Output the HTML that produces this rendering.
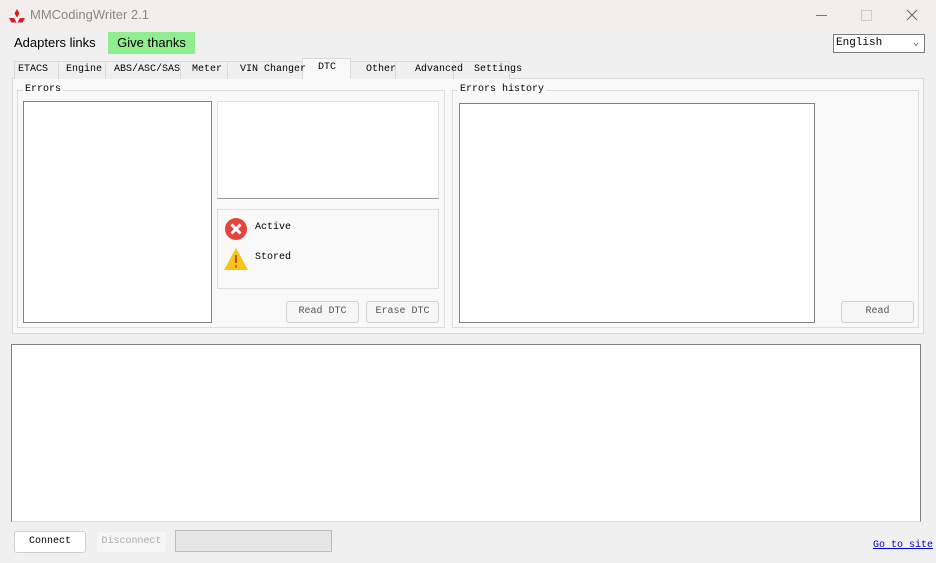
<!DOCTYPE html>
<html><head><style>
body{margin:0;width:936px;height:563px;overflow:hidden;background:#f0f0f0;font-family:"Liberation Mono",monospace;font-size:10px;position:relative}
div,span{white-space:nowrap}
.a{position:absolute}
.box{background:#fff;border:1px solid #828282;box-sizing:border-box}
.btn{position:absolute;border:1px solid #d0d0d0;border-radius:3px;background:#f6f6f6;text-align:center;color:#555;font-size:10px;line-height:20px;box-sizing:border-box;height:22px}
.tab{position:absolute;top:61px;height:18px;border:1px solid #d9d9d9;border-bottom:none;background:#f0f0f0;box-sizing:border-box}
.tt{position:absolute;top:64px}
.grp{position:absolute;border:1px solid #dcdcdc;box-sizing:border-box}
.lg{position:absolute;top:-7px;left:5px;background:#f9f9f9;padding:0 2px}
</style></head><body>
<div class="a" style="left:0;top:0;width:936px;height:31px;background:#f2eeed"></div>
<svg class="a" style="left:9px;top:9px" width="16" height="14" viewBox="0 0 16 14"><path d="M8 0L10.5 4.5L8 8.5L5.5 4.5Z M5 9L7.5 13.5H2.5L0 9Z M11 9L16 9L13.5 13.5H8.5Z" fill="#d81c23"/></svg>
<div class="a" style="left:30px;top:7px;font-family:'Liberation Sans',sans-serif;font-size:13px;color:#888">MMCodingWriter 2.1</div>
<div class="a" style="left:816px;top:15px;width:11px;height:1px;background:#777"></div>
<div class="a" style="left:861px;top:10px;width:9px;height:9px;border:1px solid #ccc"></div>
<svg class="a" style="left:906px;top:9px" width="12" height="12"><path d="M1 1L11 11M11 1L1 11" stroke="#666" stroke-width="1"/></svg>
<div class="a" style="left:14px;top:35px;font-family:'Liberation Sans',sans-serif;font-size:13px">Adapters links</div>
<div class="a" style="left:108px;top:32px;width:87px;height:22px;background:#90ee90;font-family:'Liberation Sans',sans-serif;font-size:13px;line-height:22px;text-align:center">Give thanks</div>
<div class="a" style="left:833px;top:34px;width:92px;height:19px;background:#fff;border:1px solid #7a7a7a;box-sizing:border-box;padding-left:2px;line-height:17px;font-size:11px">English<span style="position:absolute;right:5px;color:#555;font-size:10px">&#8964;</span></div>
<div class="a" style="left:12px;top:78px;width:912px;height:256px;background:#f9f9f9;border:1px solid #d9d9d9;box-sizing:border-box"></div>
<div class="tab" style="left:14px;width:45px"></div>
<div class="tab" style="left:58px;width:48px"></div>
<div class="tab" style="left:105px;width:76px"></div>
<div class="tab" style="left:180px;width:48px"></div>
<div class="tab" style="left:227px;width:76px"></div>
<div class="tab" style="left:302px;top:58px;height:21px;width:49px;background:#f9f9f9"></div>
<div class="tab" style="left:350px;width:46px"></div>
<div class="tab" style="left:395px;width:59px"></div>
<div class="tab" style="left:453px;width:57px"></div>
<div class="tt" style="left:18px">ETACS</div>
<div class="tt" style="left:66px">Engine</div>
<div class="tt" style="left:114px">ABS/ASC/SAS</div>
<div class="tt" style="left:192px">Meter</div>
<div class="tt" style="left:240px">VIN Changer</div>
<div class="tt" style="left:318px;top:62px">DTC</div>
<div class="tt" style="left:366px">Other</div>
<div class="tt" style="left:415px">Advanced</div>
<div class="tt" style="left:474px">Settings</div>
<div class="grp" style="left:17px;top:90px;width:428px;height:238px"><span class="lg">Errors</span></div>
<div class="grp" style="left:452px;top:90px;width:467px;height:238px"><span class="lg">Errors history</span></div>
<div class="a box" style="left:23px;top:101px;width:189px;height:222px"></div>
<div class="a" style="left:217px;top:101px;width:222px;height:98px;background:#fff;border:1px solid #e0e0e0;border-bottom:1px solid #999;box-sizing:border-box"></div>
<div class="a" style="left:217px;top:209px;width:222px;height:80px;border:1px solid #ddd;box-sizing:border-box"></div>
<svg class="a" style="left:224px;top:217px" width="24" height="24"><circle cx="12" cy="12" r="11" fill="#e8433b"/><path d="M7.5 7.5L16.5 16.5M16.5 7.5L7.5 16.5" stroke="#fff" stroke-width="3"/></svg>
<div class="a" style="left:255px;top:222px">Active</div>
<svg class="a" style="left:223px;top:247px" width="26" height="24"><path d="M13 1L25 23H1Z" fill="#f5c518"/><path d="M13 8V16" stroke="#d2461e" stroke-width="2"/><circle cx="13" cy="19.5" r="1.2" fill="#d2461e"/></svg>
<div class="a" style="left:255px;top:252px">Stored</div>
<div class="btn" style="left:286px;top:301px;width:73px">Read DTC</div>
<div class="btn" style="left:366px;top:301px;width:73px">Erase DTC</div>
<div class="a box" style="left:459px;top:103px;width:356px;height:220px"></div>
<div class="btn" style="left:841px;top:301px;width:73px">Read</div>
<div class="a" style="left:11px;top:344px;width:910px;height:178px;background:#fff;border:1px solid #828282;border-bottom-color:#ddd;box-sizing:border-box"></div>
<div class="btn" style="left:14px;top:531px;width:72px;background:#fff;color:#000">Connect</div>
<div class="btn" style="left:96px;top:531px;width:71px;color:#aaa;border-color:#eee">Disconnect</div>
<div class="a" style="left:175px;top:530px;width:157px;height:22px;background:#e6e6e6;border:1px solid #bcbcbc;box-sizing:border-box"></div>
<div class="a" style="left:873px;top:540px;color:#0000cc;text-decoration:underline">Go to site</div>
</body></html>
